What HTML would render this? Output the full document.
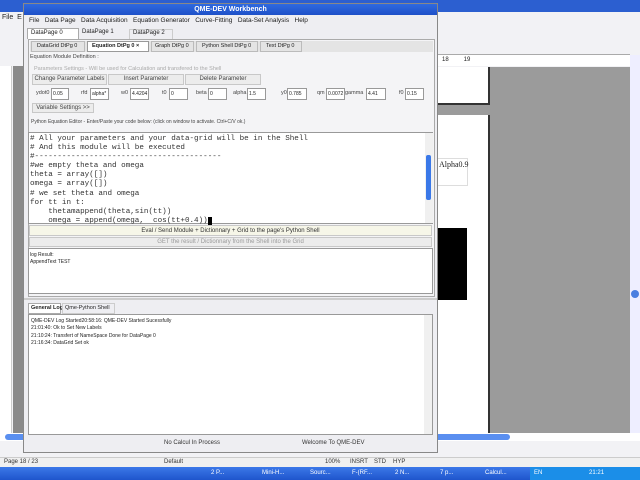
<!DOCTYPE html>
<html><head><meta charset="utf-8"><style>
*{margin:0;padding:0;box-sizing:border-box}
body{width:640px;height:480px;overflow:hidden;position:relative;background:#f2f2f5;font-family:"Liberation Sans",sans-serif;font-size:7px;color:#222;white-space:nowrap}
.a{position:absolute}
.btn{position:absolute;background:#ececec;border:1px solid #c8c8c8;font-size:6px;color:#444;text-align:center;line-height:9px;overflow:hidden}
.in{position:absolute;background:#fff;border:1px solid #999;font-size:5px;line-height:10px;padding-left:1px;height:12px;overflow:hidden}
.lb{position:absolute;font-size:5.5px;color:#444;line-height:10px}
pre{font-family:"Liberation Mono",monospace;font-size:7.6px;line-height:9.1px;color:#333}
.tb{position:absolute;top:0;height:11px;border:1px solid #bbb;overflow:hidden;font-size:5.5px;line-height:9px}
</style></head><body>
<div class="a" style="left:0;top:0;width:640px;height:12px;background:#2c5fd0"></div>
<div class="a" style="left:2px;top:14px;font-size:7px">File &nbsp;E</div>
<div class="a" style="left:0;top:66px;width:12px;height:367px;background:#fff;border-right:1px solid #ccc"></div>
<div class="a" style="left:13px;top:66px;width:10px;height:367px;background:#8a8a8a"></div>
<div class="a" style="left:437px;top:54px;width:193px;height:12px;background:#fff;border-top:1px solid #aaa"></div>
<div class="a" style="left:442px;top:57px;font-size:6px">18 &nbsp; &nbsp; &nbsp; &nbsp; 19</div>
<div class="a" style="left:437px;top:67px;width:193px;height:366px;background:#9b9b9b"></div>
<div class="a" style="left:437px;top:67px;width:53px;height:38px;background:#fff;border-right:2px solid #333;border-bottom:2px solid #333"></div>
<div class="a" style="left:437px;top:115px;width:53px;height:318px;background:#fff;border-right:2px solid #333"></div>
<div class="a" style="left:437px;top:158px;width:31px;height:28px;border:1px solid #ddd;font-family:'Liberation Serif',serif;font-size:8px;padding-top:1px;padding-left:1px">Alpha0.9</div>
<div class="a" style="left:437px;top:228px;width:30px;height:72px;background:#000"></div>
<div class="a" style="left:630px;top:55px;width:10px;height:378px;background:#eef"></div>
<div class="a" style="left:631px;top:290px;width:8px;height:8px;background:#4a7ee0;border-radius:4px"></div>
<div class="a" style="left:0;top:433px;width:640px;height:8px;background:#fff"></div>
<div class="a" style="left:5px;top:434px;width:505px;height:6px;background:#5a8ff0;border-radius:3px"></div>
<div class="a" style="left:0;top:441px;width:640px;height:16px;background:#f2f2f5"></div>
<div class="a" style="left:0;top:457px;width:640px;height:10px;background:#f0f0f0;border-top:1px solid #ccc;font-size:6px;color:#333">
 <span class="a" style="left:4px;top:1px">Page 18 / 23</span><span class="a" style="left:164px;top:1px">Default</span><span class="a" style="left:325px;top:1px">100%</span><span class="a" style="left:350px;top:1px">INSRT</span><span class="a" style="left:374px;top:1px">STD</span><span class="a" style="left:393px;top:1px">HYP</span></div>
<div class="a" style="left:0;top:467px;width:640px;height:13px;background:linear-gradient(#3b78e8,#1f55cc);color:#fff;font-size:6px;line-height:13px">
 <span class="a" style="left:211px">2 P...</span><span class="a" style="left:262px">Mini-H...</span><span class="a" style="left:310px">Sourc...</span><span class="a" style="left:352px">F-(RF...</span><span class="a" style="left:395px">2 N...</span><span class="a" style="left:440px">7 p...</span><span class="a" style="left:485px">Calcul...</span><span class="a" style="left:530px;width:110px;background:#1b8ee8;padding-left:4px">EN &nbsp; &nbsp; &nbsp; &nbsp; &nbsp; &nbsp; &nbsp; &nbsp; &nbsp; &nbsp; &nbsp; &nbsp; &nbsp; &nbsp;21:21</span></div>

<div class="a" style="left:23px;top:3px;width:415px;height:450px;background:#eeeef2;border:1px solid #888">
 <div class="a" style="left:0;top:0;width:413px;height:11px;background:linear-gradient(#2f6ae0,#1e50c8);color:#fff;font-weight:bold;font-size:7px;text-align:center;line-height:11px">QME-DEV Workbench</div>
 <div class="a" style="left:5px;top:13px;font-size:6.5px">File &nbsp; Data Page &nbsp; Data Acquisition &nbsp; Equation Generator &nbsp; Curve-Fitting &nbsp; Data-Set Analysis &nbsp; Help</div>
 <div class="a" style="left:3px;top:24px;width:52px;height:11px;background:#fff;border:1px solid #aaa;border-bottom:none;font-size:6px;padding:1px 3px">DataPage 0</div>
 <div class="a" style="left:58px;top:25px;font-size:6px">DataPage 1</div>
 <div class="a" style="left:105px;top:25px;width:44px;height:11px;border:1px solid #ccc;font-size:6px;padding:0 3px">DataPage 2</div>
 <div class="a" style="left:4px;top:35px;width:407px;height:258px;border:1px solid #aaa;background:#f4f4f6"></div>
 <div class="a" style="left:6px;top:37px;width:403px;height:11px;background:#e4e4e4">
  <span class="tb" style="left:1px;width:54px;padding-left:5px">DataGrid DtPg 0</span>
  <span class="tb" style="left:57px;width:62px;background:#fff;border-color:#999;padding-left:4px;font-weight:bold">Equation DtPg 0 ×</span>
  <span class="tb" style="left:121px;width:43px;padding-left:3px">Graph DtPg 0</span>
  <span class="tb" style="left:166px;width:62px;padding-left:5px">Python Shell DtPg 0</span>
  <span class="tb" style="left:230px;width:42px;padding-left:5px">Text DtPg 0</span></div>
 <div class="lb" style="left:6px;top:48px">Equation Module Definition :</div>
 <div class="lb" style="left:10px;top:60px;color:#aaa">Parameters Settings - Will be used for Calculation and transfered to the Shell</div>
 <div class="btn" style="left:8px;top:70px;width:75px;height:11px">Change Parameter Labels</div>
 <div class="btn" style="left:84px;top:70px;width:76px;height:11px">Insert Parameter</div>
 <div class="btn" style="left:161px;top:70px;width:76px;height:11px">Delete Parameter</div>
 <div class="lb" style="left:12px;top:84px">ydot0</div><div class="in" style="left:27px;top:84px;width:18px">0.05</div>
 <div class="lb" style="left:57px;top:84px">rfd</div><div class="in" style="left:66px;top:84px;width:19px">alpha*</div>
 <div class="lb" style="left:97px;top:84px">w0</div><div class="in" style="left:106px;top:84px;width:19px">4.4204</div>
 <div class="lb" style="left:138px;top:84px">t0</div><div class="in" style="left:145px;top:84px;width:19px">0</div>
 <div class="lb" style="left:172px;top:84px">beta</div><div class="in" style="left:184px;top:84px;width:19px">0</div>
 <div class="lb" style="left:209px;top:84px">alpha</div><div class="in" style="left:223px;top:84px;width:19px">1.5</div>
 <div class="lb" style="left:257px;top:84px">y0</div><div class="in" style="left:263px;top:84px;width:20px">0.785</div>
 <div class="lb" style="left:293px;top:84px">qm</div><div class="in" style="left:302px;top:84px;width:19px">0.0072</div>
 <div class="lb" style="left:321px;top:84px">gamma</div><div class="in" style="left:342px;top:84px;width:20px">4.41</div>
 <div class="lb" style="left:375px;top:84px">f0</div><div class="in" style="left:381px;top:84px;width:19px">0.15</div>
 <div class="btn" style="left:8px;top:99px;width:62px;height:10px">Variable Settings &gt;&gt;</div>
 <div class="lb" style="left:7px;top:113px;font-size:5px">Python Equation Editor - Enter/Paste your code below:  (click on window to activate. Ctrl+C/V ok.)</div>
 <div class="a" style="left:4px;top:128px;width:405px;height:92px;background:#fff;border:1px solid #999">
  <pre style="position:absolute;left:1px;top:2px">
# All your parameters and your data-grid will be in the Shell
# And this module will be executed
#-----------------------------------------
#we empty theta and omega
theta = array([])
omega = array([])
# we set theta and omega
for tt in t:
    thetamappend(theta,sin(tt))
    omega = append(omega,  cos(tt+0.4))<span style="background:#000">&nbsp;</span></pre>
  <div class="a" style="left:396px;top:0;width:8px;height:90px;background:#f0f0f0"></div>
  <div class="a" style="left:397px;top:22px;width:5px;height:45px;background:#3a78e8;border-radius:2px"></div>
 </div>
 <div class="btn" style="left:5px;top:221px;width:403px;height:11px;background:#f6f6e8;color:#333;line-height:10px">Eval / Send Module + Dictionnary + Grid  to the page's Python Shell</div>
 <div class="btn" style="left:5px;top:233px;width:403px;height:10px;color:#999">GET the result / Dictionnary from the Shell into the Grid</div>
 <div class="a" style="left:4px;top:244px;width:405px;height:46px;background:#fff;border:1px solid #999;font-size:5px;padding:3px 1px;line-height:7px">log Result:<br>AppendText TEST</div>
 <div class="a" style="left:0;top:294px;width:413px;height:2px;background:#ccc"></div>
 <div class="a" style="left:4px;top:299px;width:33px;height:11px;background:#fff;border:1px solid #aaa;font-size:5.5px;font-weight:bold;padding:1px 2px">General Log</div>
 <div class="a" style="left:38px;top:299px;width:53px;height:11px;border:1px solid #ccc;font-size:5.5px;padding:1px 2px">Qme-Python Shell</div>
 <div class="a" style="left:4px;top:310px;width:405px;height:121px;background:#fff;border:1px solid #999;font-size:5px;line-height:7.3px;padding:3px 2px">QME-DEV Log Started20:58:16: QME-DEV Started Sucessfully<br>21:01:40: Ok to Set New Labels<br>21:10:24: Transfert of NameSpace Done for DataPage 0<br>21:16:34: DataGrid Set ok</div>
 <div class="a" style="left:400px;top:311px;width:8px;height:119px;background:#f0f0f0"></div>
 <div class="a" style="left:140px;top:436px;font-size:6px;color:#333">No Calcul In Process</div>
 <div class="a" style="left:278px;top:436px;font-size:6px;color:#333">Welcome To QME-DEV</div>
</div>
</body></html>
